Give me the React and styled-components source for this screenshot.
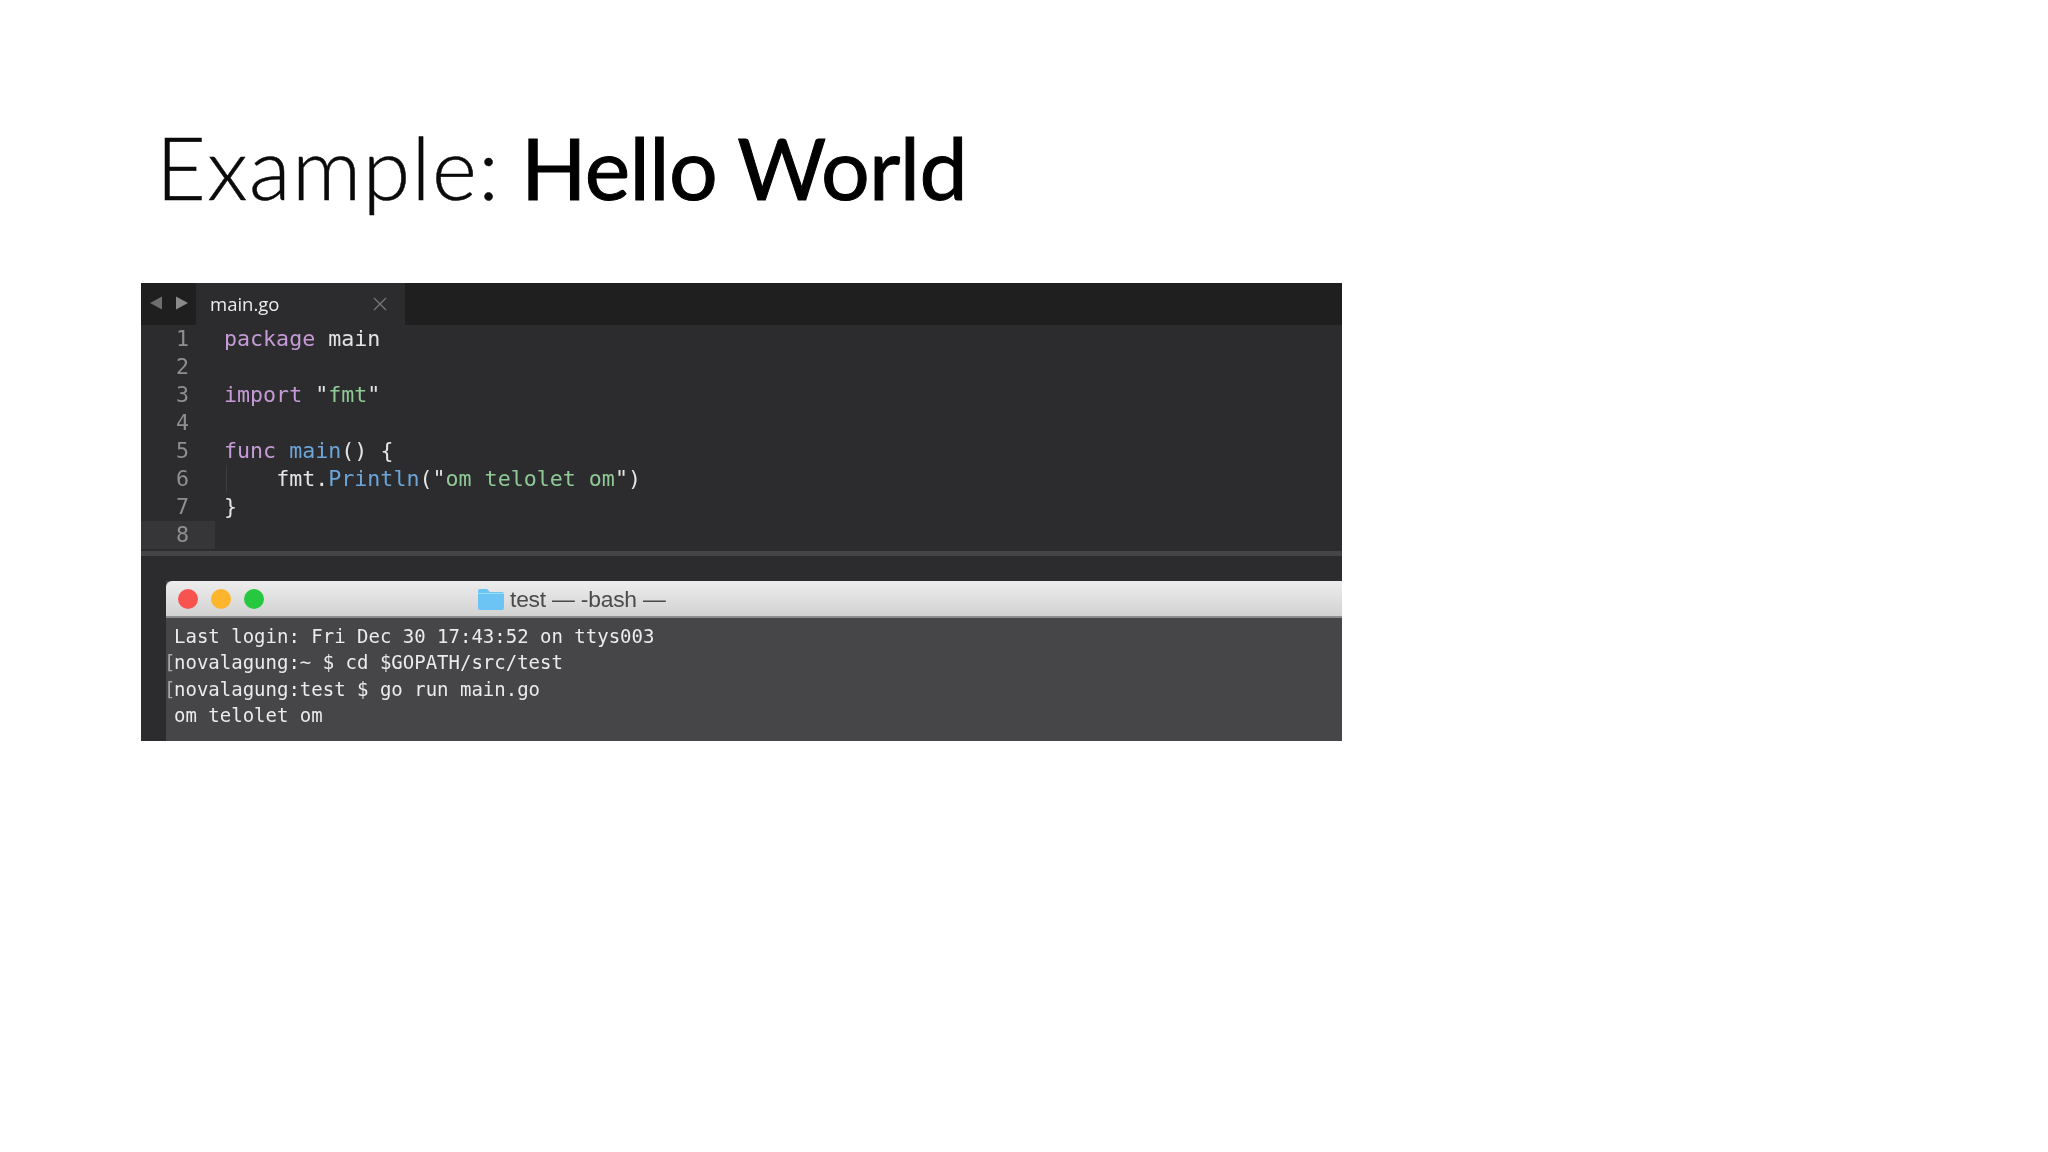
import React from "react";
import styled, { createGlobalStyle } from "styled-components";

const GlobalStyle = createGlobalStyle`
  html, body {
    margin: 0;
    background: #ffffff;
  }
`;

const Slide = styled.div`
  width: 2048px;
  height: 1152px;
  padding: 115px 0 0 141px;
  box-sizing: border-box;
  overflow: hidden;
`;

const Title = styled.h1`
  margin: 0 0 0 15px;
  height: 168px;
  line-height: 104px;
  font-family: Lato, sans-serif;
  font-size: 86px;
  font-weight: 300;
  color: #0a0a0a;
  white-space: nowrap;
  letter-spacing: 1.4px;
  word-spacing: -4px;
  -webkit-text-stroke: 0.5px #0a0a0a;

  b {
    font-weight: 400;
    color: #000;
    letter-spacing: -0.6px;
    word-spacing: 0;
    -webkit-text-stroke: 1px #000;
  }
`;

const Shot = styled.div`
  width: 1201px;
  height: 458px;
  display: flex;
  flex-direction: column;
  background: #2c2c2e;
  overflow: hidden;
  filter: blur(0.45px);
`;

const TabBar = styled.div`
  height: 42px;
  flex: none;
  display: flex;
  background: #1f1f1f;
`;

const Arrows = styled.div`
  width: 55px;
  flex: none;
  display: flex;
  align-items: center;
  justify-content: center;
  gap: 10px;
  padding-bottom: 3px;
  box-sizing: border-box;
`;

const Tab = styled.div`
  width: 209px;
  display: flex;
  align-items: center;
  justify-content: space-between;
  padding: 0 18px 2px 14px;
  box-sizing: border-box;
  background: #2c2c2e;
  color: #ececec;
  font-family: "Open Sans", sans-serif;
  font-size: 18.5px;
`;

const Editor = styled.div`
  height: 226px;
  flex: none;
  box-sizing: border-box;
`;

const Row = styled.div`
  height: 28px;
  display: flex;
  font-family: "DejaVu Sans Mono", monospace;
  font-size: 21.65px;
  line-height: 28px;
  color: #e4e4e4;
  white-space: pre;
`;

const LineNo = styled.div`
  width: 74px;
  flex: none;
  padding-right: 26px;
  box-sizing: border-box;
  text-align: right;
  color: #8f8f8f;
  background: ${(p) => (p.$active ? "#363638" : "transparent")};
`;

const Code = styled.div`
  margin-left: 9px;
  position: relative;
`;

const IndentGuide = styled.span`
  position: absolute;
  left: 2px;
  top: 0;
  bottom: 0;
  width: 1px;
  background: #3d3d3f;
`;

const Key = styled.span`color: #c59ad6;`;
const Str = styled.span`color: #8fca96;`;
const Fn = styled.span`color: #6ca5d9;`;

const Divider = styled.div`
  height: 5px;
  flex: none;
  background: #454547;
`;

const TermArea = styled.div`
  flex: 1;
  padding: 25px 0 0 25px;
  min-height: 0;
`;

const Terminal = styled.div`
  height: 100%;
  display: flex;
  flex-direction: column;
  background: #464547;
`;

const TitleBar = styled.div`
  height: 37px;
  flex: none;
  display: flex;
  align-items: center;
  padding-left: 12px;
  border-radius: 6px 0 0 0;
  border-bottom: 2px solid #8d8d8d;
  box-sizing: border-box;
  background: linear-gradient(#ededed, #d3d2d3);
`;

const Light = styled.span`
  width: 20px;
  height: 20px;
  border-radius: 50%;
  margin-right: 13px;
  background: ${(p) => p.$color};
`;

const WindowName = styled.div`
  display: flex;
  align-items: center;
  gap: 6px;
  margin-left: 201px;
  padding-top: 1px;
  font-family: "Liberation Sans", sans-serif;
  font-size: 22.8px;
  color: #4a4a4a;
  letter-spacing: -0.2px;
`;

const TermBody = styled.div`
  padding: 5px 0 0 8px;
  font-family: "DejaVu Sans Mono", monospace;
  font-size: 19px;
  line-height: 26.3px;
  color: #ebebeb;
  white-space: pre;
`;

const TermLine = styled.div`
  position: relative;
`;

const Bracket = styled.span`
  position: absolute;
  left: -10px;
  top: 0;
  color: #a8a8a8;
  font-weight: 300;
`;

function BackArrow({ flip }) {
  return (
    <svg width="16" height="16" viewBox="0 0 16 16" style={flip ? { transform: "scaleX(-1)" } : undefined}>
      <path d="M2 8 L14 1.5 L14 14.5 Z" fill={flip ? "#8a8a8a" : "#6f6f6f"} />
    </svg>
  );
}

function CloseIcon() {
  return (
    <svg width="14" height="14" viewBox="0 0 14 14" style={{ marginTop: 2 }}>
      <path d="M1 1 L13 13 M13 1 L1 13" stroke="#77777a" strokeWidth="1.3" fill="none" />
    </svg>
  );
}

function FolderIcon() {
  return (
    <svg width="26" height="22" viewBox="0 0 26 22">
      <path d="M0 3 Q0 1 2 1 H9 L12 4 H24 Q26 4 26 6 V20 Q26 22 24 22 H2 Q0 22 0 20 Z" fill="#6cc4f5" />
      <path d="M0 5 H26 V6 H0 Z" fill="#9adafa" />
    </svg>
  );
}

const codeLines = [
  <><Key>package</Key> main</>,
  "",
  <><Key>import</Key> "<Str>fmt</Str>"</>,
  "",
  <><Key>func</Key> <Fn>main</Fn>() {"{"}</>,
  <><IndentGuide />{"    "}fmt.<Fn>Println</Fn>("<Str>om telolet om</Str>")</>,
  "}",
  "",
];

const terminalLines = [
  { text: "Last login: Fri Dec 30 17:43:52 on ttys003" },
  { text: "novalagung:~ $ cd $GOPATH/src/test", mark: true },
  { text: "novalagung:test $ go run main.go", mark: true },
  { text: "om telolet om" },
];

export default function App() {
  return (
    <Slide>
      <GlobalStyle />
      <Title>Example: <b>Hello World</b></Title>
      <Shot>
        <TabBar>
          <Arrows>
            <BackArrow />
            <BackArrow flip />
          </Arrows>
          <Tab>
            main.go
            <CloseIcon />
          </Tab>
        </TabBar>
        <Editor>
          {codeLines.map((line, i) => (
            <Row key={i}>
              <LineNo $active={i === 7}>{i + 1}</LineNo>
              <Code>{line}</Code>
            </Row>
          ))}
        </Editor>
        <Divider />
        <TermArea>
          <Terminal>
            <TitleBar>
              <Light $color="#f8544f" />
              <Light $color="#fdb52c" />
              <Light $color="#26c83f" />
              <WindowName>
                <FolderIcon />
                test — -bash —
              </WindowName>
            </TitleBar>
            <TermBody>
              {terminalLines.map((line) => (
                <TermLine key={line.text}>
                  {line.mark && <Bracket>[</Bracket>}
                  {line.text}
                </TermLine>
              ))}
            </TermBody>
          </Terminal>
        </TermArea>
      </Shot>
    </Slide>
  );
}
